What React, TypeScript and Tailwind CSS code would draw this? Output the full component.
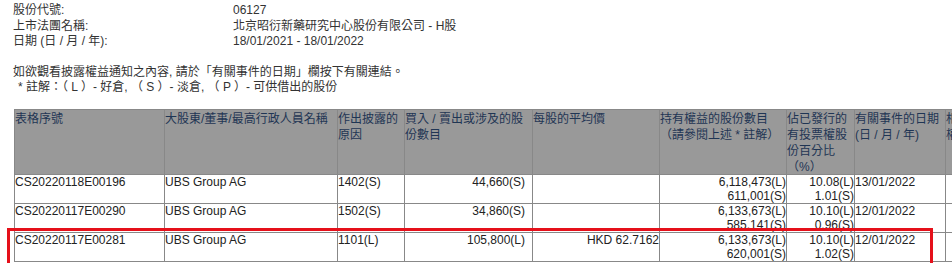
const cols = "grid-cols-[150px_173px_67px_128px_127px_127px_68px_91px_80px]";

const headers: string[][] = [
  ["表格序號"],
  ["大股東/董事/最高行政人員名稱"],
  ["作出披露的", "原因"],
  ["買入 / 賣出或涉及的股", "份數目"],
  ["每股的平均價"],
  ["持有權益的股份數目", "（請參閱上述 * 註解）"],
  ["佔已發行的", "有投票權股", "份百分比", "（%）"],
  ["有關事件的日期", "(日 / 月 / 年)"],
  ["相聯法團", "權益/債權"],
];

type Row = {
  id: string;
  name: string;
  reason: string;
  shares: string;
  price: string;
  held: string[];
  pct: string[];
  date: string;
};

const rows: Row[] = [
  {
    id: "CS20220118E00196",
    name: "UBS Group AG",
    reason: "1402(S)",
    shares: "44,660(S)",
    price: "",
    held: ["6,118,473(L)", "611,001(S)"],
    pct: ["10.08(L)", "1.01(S)"],
    date: "13/01/2022",
  },
  {
    id: "CS20220117E00290",
    name: "UBS Group AG",
    reason: "1502(S)",
    shares: "34,860(S)",
    price: "",
    held: ["6,133,673(L)", "585,141(S)"],
    pct: ["10.10(L)", "0.96(S)"],
    date: "12/01/2022",
  },
  {
    id: "CS20220117E00281",
    name: "UBS Group AG",
    reason: "1101(L)",
    shares: "105,800(L)",
    price: "HKD 62.7162",
    held: ["6,133,673(L)", "620,001(S)"],
    pct: ["10.10(L)", "1.02(S)"],
    date: "12/01/2022",
  },
];

const cell = "border-r border-b border-[#888] leading-[14px] h-[29px] overflow-hidden";

export default function App() {
  return (
    <div
      className="relative w-[952px] h-[263px] overflow-hidden bg-white text-[12px] text-[#333]"
      style={{ fontFamily: '"Liberation Sans", Arial, "Noto Sans CJK TC", sans-serif' }}
    >
      <div className="pt-[3px] pl-[13px] leading-[15.5px]">
        <div className="grid grid-cols-[220px_auto]">
          <span>股份代號:</span>
          <span>06127</span>
          <span>上市法團名稱:</span>
          <span>北京昭衍新藥研究中心股份有限公司 - H股</span>
          <span>日期 (日 / 月 / 年):</span>
          <span>18/01/2021 - 18/01/2022</span>
        </div>
        <div className="mt-[15px]">
          <p>如欲觀看披露權益通知之內容, 請於「有關事件的日期」欄按下有關連結。</p>
          <p className="pl-[5px] whitespace-pre">* 註解：（ L ）- 好倉, （ S ）- 淡倉, （ P ）- 可供借出的股份</p>
        </div>
      </div>

      <div className={`ml-[14px] mt-[13.5px] w-[1012px] grid ${cols} border-l border-t border-[#888] text-[#222]`}>
        {headers.map((lines, i) => (
          <div
            key={i}
            className="h-[65px] bg-[#999999] border-r border-b border-[#888] text-[#1f3554] leading-[16px] pt-[1px] whitespace-nowrap overflow-hidden"
          >
            {lines.map((l, j) => (
              <div key={j}>{l}</div>
            ))}
          </div>
        ))}

        {rows.map((r) => (
          <div key={r.id} className="contents">
            <div className={cell}>{r.id}</div>
            <div className={cell}>{r.name}</div>
            <div className={cell}>{r.reason}</div>
            <div className={`${cell} text-right pr-[7px]`}>{r.shares}</div>
            <div className={`${cell} text-right`}>{r.price}</div>
            <div className={`${cell} text-right`}>
              {r.held.map((h) => (
                <div key={h}>{h}</div>
              ))}
            </div>
            <div className={`${cell} text-right`}>
              {r.pct.map((p) => (
                <div key={p}>{p}</div>
              ))}
            </div>
            <div className={cell}>{r.date}</div>
            <div className={cell}></div>
          </div>
        ))}
      </div>

      <div className="absolute left-[7px] top-[228px] w-[926px] h-[60px] border-[3px] border-[#e5101a] pointer-events-none" />
    </div>
  );
}
